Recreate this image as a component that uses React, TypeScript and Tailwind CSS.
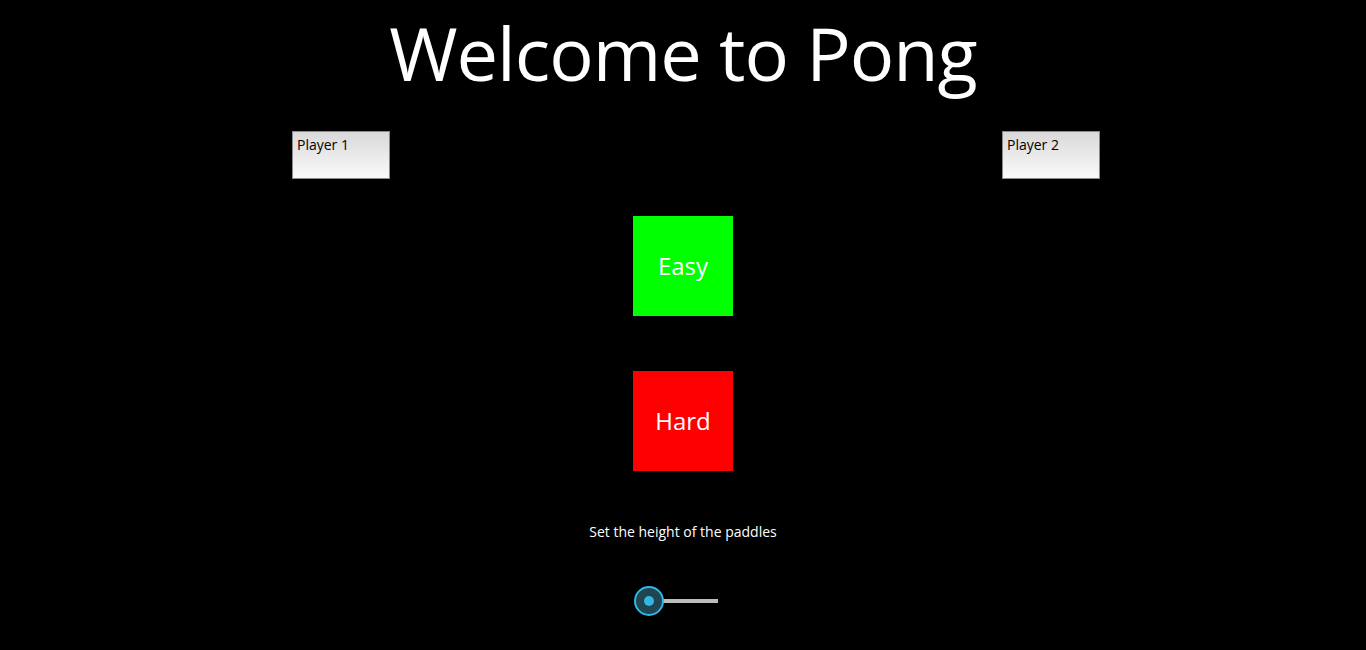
const font = { fontFamily: '"Open Sans", "Noto Sans", sans-serif' };

function PlayerBox({ label }: { label: string }) {
  return (
    <div className="w-[98px] h-[48px] border border-[#8a8a8a] bg-gradient-to-b from-[#d9d9d9] to-[#fafafa] px-[4px] pt-[3px] text-[14px] leading-[20px] text-black">
      {label}
    </div>
  );
}

export default function App() {
  return (
    <div className="w-full h-[650px] bg-black overflow-hidden text-white" style={font}>
      <h1 className="text-center text-[74px] leading-[104px] tracking-[-1px] pt-[1px]">Welcome to Pong</h1>

      <div className="flex mt-[26px] pl-[292px] gap-[612px]">
        <PlayerBox label="Player 1" />
        <PlayerBox label="Player 2" />
      </div>

      <div className="flex flex-col items-center">
        <button className="mt-[37px] w-[100px] h-[100px] bg-[#00ff00] text-white text-[24px]">Easy</button>
        <button className="mt-[55px] w-[100px] h-[100px] bg-[#ff0000] text-white text-[24px]">Hard</button>
        <p className="mt-[51px] text-[14px] leading-[20px]">Set the height of the paddles</p>

        <div className="mt-[43px] w-[100px] h-[32px] flex items-center pl-[1px]">
          <div className="relative w-[84px] h-[32px] flex items-center">
            <div className="ml-[16px] w-[68px] h-[4px] bg-[#bdbdbd]" />
            <div className="absolute left-0 top-[1px] w-[30px] h-[30px] rounded-full border-[2px] border-[#33b5e5] bg-[#1f4553] flex items-center justify-center">
              <div className="w-[10px] h-[10px] rounded-full bg-[#33b5e5]" />
            </div>
          </div>
        </div>
      </div>
    </div>
  );
}
